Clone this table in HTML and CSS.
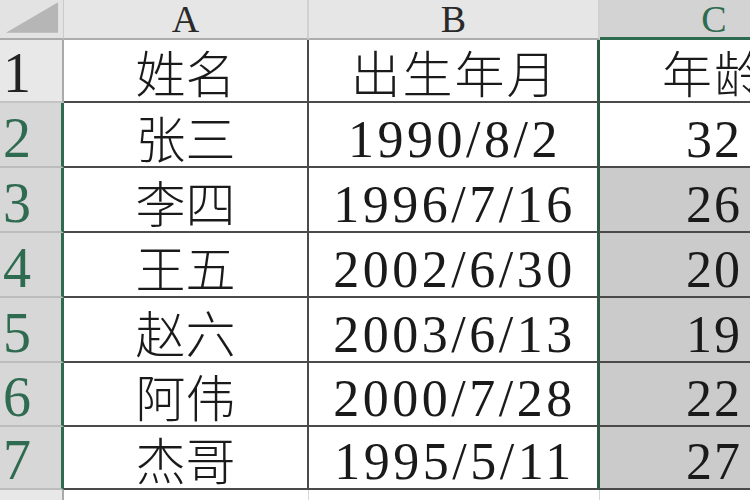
FILE: index.html
```html
<!DOCTYPE html>
<html lang="zh">
<head>
<meta charset="utf-8">
<title>Sheet</title>
<link rel="stylesheet" href="styles.css">
</head>
<body>
<div class="sheet">
  <div class="corner"><svg class="tri" width="64" height="40" viewBox="0 0 64 40"><polygon points="6,33 59,33 59,2" fill="#b6b6b6"/></svg></div>
  <div class="colhead">A</div>
  <div class="colhead">B</div>
  <div class="colhead sel">C</div>

  <div class="rowhead">1</div>
  <div class="cell">姓名</div>
  <div class="cell date cjk">出生年月</div>
  <div class="cell age cjk">年龄</div>

  <div class="rowhead sel">2</div>
  <div class="cell">张三</div>
  <div class="cell date">1990/8/2</div>
  <div class="cell age">32</div>

  <div class="rowhead sel">3</div>
  <div class="cell">李四</div>
  <div class="cell date">1996/7/16</div>
  <div class="cell age grey">26</div>

  <div class="rowhead sel">4</div>
  <div class="cell">王五</div>
  <div class="cell date">2002/6/30</div>
  <div class="cell age grey">20</div>

  <div class="rowhead sel">5</div>
  <div class="cell">赵六</div>
  <div class="cell date">2003/6/13</div>
  <div class="cell age grey">19</div>

  <div class="rowhead sel">6</div>
  <div class="cell">阿伟</div>
  <div class="cell date">2000/7/28</div>
  <div class="cell age grey">22</div>

  <div class="rowhead sel">7</div>
  <div class="cell">杰哥</div>
  <div class="cell date">1995/5/11</div>
  <div class="cell age grey">27</div>

  <div class="rowhead last"></div>
  <div class="cell empty"></div>
  <div class="cell empty"></div>
  <div class="cell empty"></div>
</div>
</body>
</html>
```

FILE: styles.css
```css
html, body {
  margin: 0;
  padding: 0;
  background: #ffffff;
  overflow: hidden;
}

.sheet {
  display: grid;
  grid-template-columns: 64px 245px 291px 230px;
  grid-template-rows: 40px 63px 65px 65px 65px 65px 64px 63px 40px;
  width: 830px;
  font-family: "Liberation Serif", "Noto Sans CJK SC", serif;
  color: #1a1a1a;
}

.sheet > div {
  box-sizing: border-box;
  display: flex;
  align-items: flex-end;
  justify-content: center;
  line-height: 1;
}

.corner {
  background: #e3e3e3;
  border-right: 1px solid #cacaca;
  border-bottom: 2px solid #ababab;
}

.tri {
  display: block;
  align-self: flex-start;
}

.colhead {
  background: #e6e6e6;
  border-right: 2px solid #d0d0d0;
  border-bottom: 2px solid #adadad;
  font-size: 38px;
  line-height: 0.85 !important;
  color: #2a2a2a;
  padding-bottom: 3px;
}

.colhead.sel {
  background: #d3d3d3;
  color: #2f6b50;
  border-bottom: 3px solid #2f6b50;
  padding-bottom: 2px;
}

.rowhead {
  background: #e8e8e8;
  border-right: 2px solid #aaaaaa;
  border-bottom: 2px solid #c4c4c4;
  font-size: 56px;
  justify-content: flex-start !important;
  padding-left: 3px;
  padding-bottom: 0;
  color: #222;
}

.rowhead.sel {
  background: #d7d7d7;
  color: #2f6b50;
  border-right: 3px solid #2f6b50;
  border-bottom: 2px solid #bcbcbc;
}

.rowhead.last {
  border-bottom: none;
}

.cell {
  background: #ffffff;
  border-right: 2px solid #4a4a4a;
  border-bottom: 2px solid #4a4a4a;
  font-size: 50px;
  font-weight: 300;
  padding-bottom: 0;
}

.cell.date {
  font-size: 52px;
  font-weight: 400;
  letter-spacing: 3.5px;
  border-right: 3px solid #2f5a46;
  padding-left: 3px;
  padding-bottom: 0;
}

.cell.age {
  font-size: 52px;
  font-weight: 400;
  letter-spacing: 2px;
  padding-bottom: 0;
}

.cell.cjk {
  font-size: 50px;
  font-weight: 300;
  letter-spacing: 2px;
}

.cell.grey {
  background: #cbcbcb;
}

.cell.empty {
  border-bottom: none;
  border-right: 1px solid #d6d6d6;
}

.cell.date.empty {
  border-right: 2px solid #6f8a7c;
}
```
